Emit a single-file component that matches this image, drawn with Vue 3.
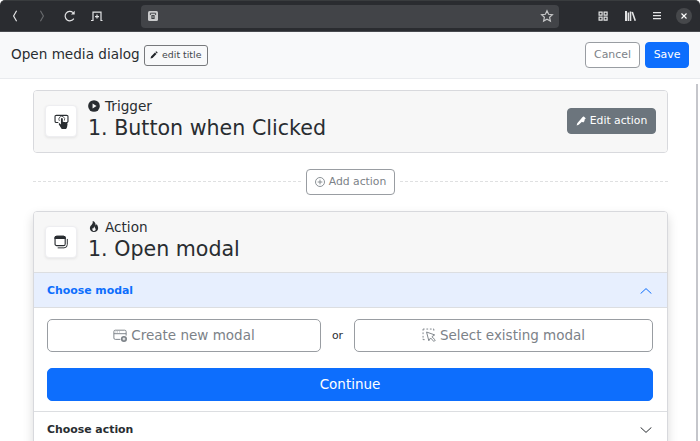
<script setup>
import { ref } from 'vue'

const modalOpen = ref(true)
</script>

<template>
  <div class="window">
    <header class="chrome">
      <nav class="tools">
        <svg class="ic" viewBox="0 0 16 16"><path d="M9.6 2.8 6.6 8l3 5.2" /></svg>
        <svg class="ic dim" viewBox="0 0 16 16"><path d="M6.4 2.8 9.4 8l-3 5.2" /></svg>
        <svg class="ic" viewBox="0 0 16 16"><path d="M12.8 10.6A4.7 4.7 0 1 1 12 4.6" /><path d="M10 6.4h3.7V2.7z" fill="currentColor" stroke="none" /></svg>
        <svg class="ic tab" viewBox="0 0 16 16"><path d="M3 12.5H4V4.1h8v8.4h1.5M2 12.5h2M6 8.6h4M8 6.6v4" /></svg>
      </nav>
      <div class="address">
        <svg class="lock" viewBox="0 0 10 10"><rect width="10" height="10" rx="1.5" fill="#c9cacb" /><path d="M2.4 4V2.2h5.2V4" fill="none" stroke="#3e4044" stroke-width=".9" /><path d="M3.4 4.1h3.2V8H3.4z" fill="#3e4044" /><path d="M4.6 4.9h.8v2h-.8z" fill="#c9cacb" /></svg>
        <svg class="star" viewBox="0 0 16 16"><path d="m8 2.8 1.6 3.5 3.8.4-2.8 2.6.8 3.8L8 11.2l-3.4 1.9.8-3.8-2.8-2.6 3.8-.4z" /></svg>
      </div>
      <nav class="menu">
        <svg class="ic" viewBox="0 0 16 16"><path d="M4.1 4.1h3v3h-3zM9.1 4.1h3v3h-3zM4.1 9.1h3v3h-3zM9.1 9.1h3v3h-3z" /></svg>
        <svg class="ic" viewBox="0 0 16 16"><path d="M3 3h2v10H3zM5.6 4.5h1.5V13H5.6zM7.7 3.5h1.6V13H7.7zM9.5 4.2l1.5-.5L14 12.6l-1.5.5z" fill="currentColor" stroke="none" /></svg>
        <svg class="ic" viewBox="0 0 16 16"><path d="M4 4.6h8M4 7.6h8M4 10.6h8" /></svg>
        <span class="close"><svg viewBox="0 0 16 16"><path d="m5.5 5.5 5 5m0-5-5 5" /></svg></span>
      </nav>
    </header>

    <section class="titlebar">
      <h1>Open media dialog</h1>
      <button class="btn small">
        <svg viewBox="0 0 16 16"><path d="m10.8 2.2 1-1a1.3 1.3 0 0 1 1.8 0l1.2 1.2a1.3 1.3 0 0 1 0 1.8l-1 1zM9.9 3.1l3 3-7.8 7.8L1 15l1.1-4.1z" /></svg>edit title
      </button>
      <span class="grow"></span>
      <button class="btn outline">Cancel</button>
      <button class="btn primary">Save</button>
    </section>

    <div class="body">
      <main>
        <article class="card">
          <div class="head trigger">
            <div class="tile">
              <svg viewBox="0 0 16 16"><path d="M4.6 9H2.5A1.4 1.4 0 0 1 1.1 7.6V2.8a1.4 1.4 0 0 1 1.4-1.4h11a1.4 1.4 0 0 1 1.4 1.4v4.8A1.4 1.4 0 0 1 13.5 9h-.9" fill="none" stroke="currentColor" stroke-width="1.2" /><path d="M5.8 7.4a3.1 3.1 0 1 1 5.2-.4" fill="none" stroke="currentColor" stroke-width=".8" /><path d="M7.4 5.2a1 1 0 0 1 2 0v3l3.3.6c1.2.2 1.8 1 1.7 2.1l-.5 3.1-1 2H8.2l-3-4.8c-.5-1 .7-1.6 1.3-.9l.9.8z" /></svg>
            </div>
            <div class="words">
              <div class="kind"><svg viewBox="0 0 16 16"><circle cx="8" cy="8" r="7.8" /><path d="M6.1 4.8v6.4L11.4 8z" fill="#f7f7f7" /></svg>Trigger</div>
              <h2>1. Button when Clicked</h2>
            </div>
            <span class="grow"></span>
            <button class="btn gray">
              <svg viewBox="0 0 16 16"><path d="m10.2 2.1 1.5-1.2a1 1 0 0 1 1.3.1l2.1 2.1a1 1 0 0 1 .1 1.3L13.5 6l.2 2-2.2 2.2-2-1L4.3 14 1 15l1-3.6z" /></svg>Edit action
            </button>
          </div>
        </article>

        <div class="between">
          <i></i>
          <button class="btn outline add">
            <svg viewBox="0 0 16 16"><circle cx="8" cy="8" r="7.2" /><path d="M8 4.2v7.6M4.2 8h7.6" /></svg>Add action
          </button>
          <i></i>
        </div>

        <article class="card active">
          <div class="head">
            <div class="tile">
              <svg class="windows" viewBox="0 0 16 16"><rect x="1.2" y="1.4" width="11.6" height="10.8" rx="2" /><path d="M1.2 4V3q.2-1.6 1.8-1.6h8q1.6 0 1.8 1.6v1z" fill="currentColor" /><path d="M15.2 4.5v6.3q0 3.9-3.8 3.9H4.2" stroke-width="1.1" /></svg>
            </div>
            <div class="words">
              <div class="kind"><svg class="fire" viewBox="0 0 16 16"><path fill-rule="evenodd" d="M8 16c3.3 0 6-2 6-5.5 0-1.5-.5-4-2.5-6 .25 1.5-1.25 2-1.25 2C11 4 9 .5 6 0c.36 2 .5 4-2 6-1.25 1-2 2.73-2 4.5C2 14 4.7 16 8 16Zm0-1.5c-1.5 0-2.4-.9-2.4-2.2 0-.7.25-1.6 1-2.4 0 .75.75 1.25.75 1.25.1-1.2.7-2.7 1.8-3-.2 1-.25 1.7.5 2.4.5.5.8 1.1.8 1.9 0 1.2-1 2.05-2.45 2.05Z" /></svg>Action</div>
              <h2>1. Open modal</h2>
            </div>
          </div>
          <button class="row open" @click="modalOpen = !modalOpen">
            Choose modal
            <svg viewBox="0 0 12 6"><path d="M.6 5.6 6 .6l5.4 5" /></svg>
          </button>
          <div v-if="modalOpen" class="panel">
            <div class="choices">
              <button class="btn outline large create">
                <svg viewBox="0 0 16 16"><path d="M8.4 13H2.6A1.6 1.6 0 0 1 1 11.4V4.1a1.6 1.6 0 0 1 1.6-1.6h10.8A1.6 1.6 0 0 1 15 4.1v4.6M1 6.5h14M3 4.5h.7M5 4.5h.7M7 4.5h.7" /><circle cx="12.5" cy="12.5" r="3.5" fill="currentColor" stroke="none" /><path d="M12.5 10.9v3.2M10.9 12.5h3.2" stroke="#fff" /></svg>Create new modal
              </button>
              <span>or</span>
              <button class="btn outline large select">
                <svg viewBox="0 0 16 16"><path d="M1.2 3V1.2H3M5 1.2h2M9 1.2h2M12.6 1.2h.9V3M1.2 5v2M1.2 9v2M1.2 12.3v1H3" /><path d="m5.2 4.6 2.6 10 2-3.2 3.8 4 1.6-1.6-3.9-3.9 3.2-2z" /></svg>Select existing modal
              </button>
            </div>
            <button class="btn primary large">Continue</button>
          </div>
          <button class="row last">
            Choose action
            <svg viewBox="0 0 12 6"><path d="M.6.4 6 5.4l5.4-5" /></svg>
          </button>
        </article>
      </main>
      <div class="scroll"></div>
    </div>
  </div>
</template>

<style>
body {
  overflow: hidden;
  background: #fff;
}
</style>

<style scoped>
* {
  box-sizing: border-box;
}
.window {
  width: 700px;
  height: 441px;
  overflow: hidden;
  display: flex;
  flex-direction: column;
  font: 10.9px/16px "DejaVu Sans", sans-serif;
  color: #292d31;
  background: #fff;
}
h1, h2 {
  margin: 0;
  font-weight: 400;
}
svg {
  flex: none;
  fill: currentColor;
}
button {
  font: inherit;
  color: inherit;
}
.grow {
  flex: 1;
}
.chrome {
  height: 32px;
  flex: none;
  display: flex;
  align-items: center;
  padding: 0 7px;
  background: #2a2c30;
  border-top: 1px solid #393c3e;
  border-bottom: 1px solid #484b4f;
  border-radius: 5px 5px 0 0;
  color: #e2e3e4;
}
.tools {
  width: 134px;
  display: flex;
  gap: 11px;
}
.ic {
  width: 16px;
  height: 16px;
  fill: none;
  stroke: currentColor;
  stroke-width: 1.2;
}
.dim {
  color: #67696c;
}
.tab {
  margin-left: 1px;
}
.address {
  width: 418px;
  height: 23px;
  padding: 0 4px 0 7px;
  display: flex;
  align-items: center;
  justify-content: space-between;
  border-radius: 4px;
  background: #424448;
}
.lock {
  width: 10px;
  height: 10px;
}
.star {
  width: 16px;
  height: 16px;
  fill: none;
  stroke: #c5c6c7;
  stroke-width: 1.2;
}
.menu {
  display: flex;
  align-items: center;
  gap: 11px;
  margin-left: 36px;
}
.close {
  width: 16px;
  height: 16px;
  border-radius: 50%;
  background: #46484b;
}
.close svg {
  display: block;
  width: 16px;
  height: 16px;
  stroke: #fff;
  stroke-width: 1.1;
}
.titlebar {
  height: 47px;
  flex: none;
  display: flex;
  align-items: center;
  padding: 0 11px;
  background: #f8f9fa;
  border-bottom: 1px solid #e9ebee;
}
h1 {
  font-size: 13.6px;
  line-height: 20px;
  padding-bottom: 2px;
  margin-right: 4px;
}
.btn {
  display: inline-flex;
  align-items: center;
  justify-content: center;
  height: 26px;
  padding: 0 8px;
  border: 1px solid #999da2;
  border-radius: 4px;
  background: #fff;
  white-space: nowrap;
}
.btn svg {
  width: 10px;
  height: 10px;
  margin-right: 4px;
}
.small {
  width: 64px;
  height: 21px;
  padding: 0;
  font-size: 9.4px;
  border-color: #77797c;
  border-radius: 3px;
  background: #f8f9fa;
  color: #42464a;
}
.small svg {
  width: 8px;
  height: 8px;
  color: #212529;
}
.outline {
  color: #7c8288;
}
.primary {
  color: #fff;
  background: #0d6efd;
  border-color: #0d6efd;
}
.titlebar .outline {
  width: 55px;
  margin-right: 5px;
}
.titlebar .primary {
  width: 44px;
}
.body {
  flex: 1;
  min-height: 0;
  display: flex;
}
main {
  width: 696px;
  padding: 11px 28px 0 33px;
}
.scroll {
  width: 2px;
  margin-top: 5px;
  background: #c5c6cb;
}
.card {
  border: 1px solid #d8d9dd;
  border-radius: 4px;
  overflow: hidden;
  background: #fff;
}
.active {
  height: 240px;
  box-shadow: 0 5px 11px rgba(0, 0, 0, 0.15);
}
.head {
  height: 60px;
  padding: 0 11px;
  display: flex;
  align-items: center;
  background: #f7f7f7;
}
.trigger {
  height: 61px;
  padding-bottom: 1px;
}
.tile {
  width: 32px;
  height: 32px;
  display: grid;
  place-items: center;
  border: 1px solid #eeeef1;
  border-radius: 4px;
  background: #fff;
  box-shadow: 0 1px 3px rgba(0, 0, 0, 0.08);
}
.tile svg {
  width: 15px;
  height: 15px;
}
.tile .windows {
  width: 14px;
  height: 14px;
  fill: none;
  stroke: currentColor;
  stroke-width: 1.3;
}
.words {
  margin-left: 11px;
  height: 48px;
}
.kind {
  display: flex;
  align-items: center;
  height: 17px;
  font-size: 13.6px;
}
.kind svg {
  width: 12px;
  height: 12px;
  margin-right: 5px;
}
.kind .fire {
  height: 11px;
}
h2 {
  font-size: 20.6px;
  line-height: 28px;
}
.gray {
  width: 89px;
  color: #fff;
  background: #6c757d;
  border-color: #6c757d;
}
.gray, .add {
  font-size: 10.8px;
}
.between {
  height: 58px;
  padding-bottom: 1px;
  display: flex;
  align-items: center;
  gap: 5px;
}
.between i {
  flex: 1;
  border-top: 1px dashed #dfe0e1;
}
.add {
  width: 89px;
}
.add svg {
  fill: none;
  stroke: currentColor;
  stroke-width: 1.4;
}
.row {
  width: 100%;
  height: 36px;
  display: flex;
  align-items: center;
  justify-content: space-between;
  padding: 1px 15px 0 13px;
  border: 0;
  border-top: 1px solid #dcdee1;
  border-bottom: 1px solid #dcdee1;
  background: #fff;
  font-weight: 700;
}
.row svg {
  width: 12px;
  height: 6px;
  fill: none;
  stroke: currentColor;
}
.open {
  color: #0d6efd;
  background: #e7effe;
}
.last {
  border-bottom: 0;
}
.panel {
  height: 103px;
  padding: 11px 13px 0;
}
.choices {
  display: flex;
  align-items: center;
  margin-bottom: 16px;
}
.choices span {
  width: 33px;
  text-align: center;
}
.large {
  height: 33px;
  padding-bottom: 1px;
  font-size: 13.5px;
  border-radius: 5px;
}
.large svg {
  width: 14px;
  height: 14px;
  fill: none;
  stroke: currentColor;
  stroke-width: 1.1;
}
.create {
  width: 274px;
}
.select {
  width: 299px;
}
.panel > .primary {
  width: 606px;
}
</style>
